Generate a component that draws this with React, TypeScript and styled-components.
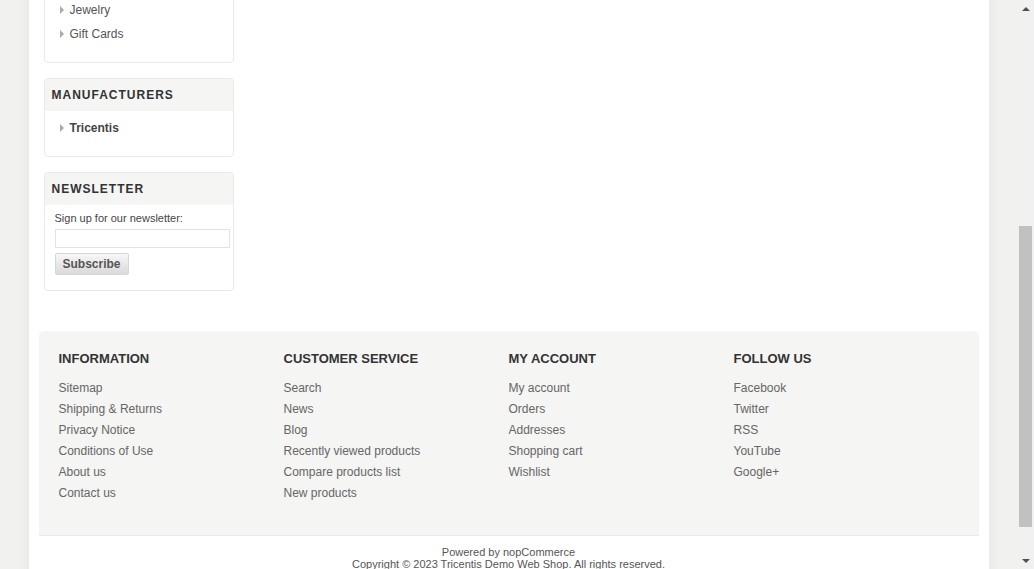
import React, { useLayoutEffect, useRef, useState } from "react";
import styled, { createGlobalStyle } from "styled-components";

const GlobalStyle = createGlobalStyle`
  html, body {
    margin: 0;
    padding: 0;
    height: 100%;
    overflow: hidden;
  }
  body {
    font: 12px "Liberation Sans", Arial, sans-serif;
    color: #444;
    background: #f1f1ef;
  }
  * { box-sizing: border-box; }
  ul { list-style: none; margin: 0; padding: 0; }
  a { color: inherit; text-decoration: none; }
`;

const Window = styled.div`
  height: 100vh;
  display: flex;
`;

const Viewport = styled.div`
  flex: 1;
  height: 100%;
  overflow: hidden;
  background: #f1f1ef;
`;

/* fake window scrollbar, the headless browser hides the real one */
const ScrollBar = styled.div`
  width: 17px;
  height: 100%;
  display: flex;
  flex-direction: column;
  background: #f1f1f1;
`;

const Arrow = styled.div<{ $down?: boolean }>`
  height: 17px;
  flex: none;
  display: flex;
  align-items: center;
  justify-content: center;

  &::before {
    content: "";
    border-left: 4px solid transparent;
    border-right: 4px solid transparent;
    ${(p) =>
      p.$down ? "border-top: 4px solid #505050;" : "border-bottom: 4px solid #505050;"}
  }
`;

const Track = styled.div`
  flex: 1;
  display: flex;
  flex-direction: column;
`;

const Thumb = styled.div`
  margin: 0 2px;
  background: #c1c1c1;
`;

const Master = styled.div`
  width: 960px;
  margin: 0 auto;
  background: #fff;
  box-shadow: 0 0 14px rgba(0, 0, 0, 0.06);
`;

const Header = styled.header`
  height: 150px;
  padding: 20px 15px 0;
  display: flex;
  justify-content: space-between;
  align-items: flex-start;
`;

const Logo = styled.div`
  font-size: 30px;
  font-weight: bold;
  color: #5c5c5c;
  padding-top: 30px;
`;

const HeaderLinks = styled.ul`
  display: flex;
  gap: 14px;
  color: #666;
  font-size: 12px;
`;

const TopMenu = styled.ul`
  height: 50px;
  margin: 0 10px 36px;
  display: flex;
  align-items: center;
  gap: 24px;
  padding: 0 20px;
  background: #f5f5f3;
  border-radius: 5px;
  font-weight: bold;
  color: #333;
  text-transform: uppercase;
`;

const Main = styled.div`
  display: flex;
  padding: 0 15px;
`;

const Side = styled.aside`
  width: 190px;
  display: flex;
  flex-direction: column;
  gap: 15px;
`;

const Block = styled.div`
  border: 1px solid #e9e9e9;
  border-radius: 4px;
`;

const BlockTitle = styled.div`
  height: 32px;
  display: flex;
  align-items: center;
  padding: 0 7px;
  background: #f5f5f3;
  border-radius: 3px 3px 0 0;
  font-size: 12px;
  font-weight: bold;
  letter-spacing: 1px;
  text-transform: uppercase;
  color: #333;
`;

const BlockList = styled.ul`
  padding: 5px 0 16px;
`;

const ListItem = styled.li<{ $bold?: boolean }>`
  height: 24px;
  display: flex;
  align-items: center;
  padding-left: 15px;
  font-weight: ${(p) => (p.$bold ? "bold" : "normal")};
  color: ${(p) => (p.$bold ? "#444" : "#555")};

  &::before {
    content: "";
    border-left: 4px solid #aaa;
    border-top: 4px solid transparent;
    border-bottom: 4px solid transparent;
    margin-right: 6px;
  }
`;

const NewsBody = styled.div`
  padding: 7px 0 15px 10px;
  display: flex;
  flex-direction: column;
  align-items: flex-start;
`;

const NewsLabel = styled.div`
  font-size: 11px;
  line-height: 13px;
  color: #444;
`;

const NewsInput = styled.input`
  width: 175px;
  height: 19px;
  margin: 4px 0 5px;
  border: 1px solid #e3e3e3;
  background: #fff;
  outline: none;
`;

const Button = styled.button`
  width: 74px;
  height: 22px;
  padding: 0;
  border: 1px solid #d6d6d6;
  border-radius: 2px;
  background: linear-gradient(#f7f7f7, #dadada);
  font: bold 12px "Liberation Sans", Arial, sans-serif;
  color: #555;
`;

const Center = styled.div`
  flex: 1;
`;

const Footer = styled.footer`
  margin: 40px 10px 0;
`;

const FooterMenu = styled.div`
  height: 205px;
  display: grid;
  grid-template-columns: repeat(4, 225px);
  padding: 19px 20px 0;
  background: #f5f5f3;
  border-radius: 5px 5px 0 0;
  border-bottom: 1px solid #e8e8e6;
`;

const ColumnTitle = styled.h3`
  margin: 0 0 10px;
  font-size: 13px;
  line-height: 18px;
  font-weight: bold;
  color: #333;
  text-transform: uppercase;
`;

const FooterLink = styled.li`
  font-size: 12px;
  line-height: 21px;
  color: #666;
`;

const FooterBottom = styled.div`
  padding: 10px 0 46px;
  text-align: center;
  font-size: 11px;
  line-height: 12px;
  color: #555;
`;

const categories = [
  "Books",
  "Computers",
  "Electronics",
  "Apparel & Shoes",
  "Digital downloads",
  "Jewelry",
  "Gift Cards",
];

const columns = [
  {
    title: "Information",
    links: ["Sitemap", "Shipping & Returns", "Privacy Notice", "Conditions of Use", "About us", "Contact us"],
  },
  {
    title: "Customer service",
    links: ["Search", "News", "Blog", "Recently viewed products", "Compare products list", "New products"],
  },
  {
    title: "My account",
    links: ["My account", "Orders", "Addresses", "Shopping cart", "Wishlist"],
  },
  {
    title: "Follow us",
    links: ["Facebook", "Twitter", "RSS", "YouTube", "Google+"],
  },
];

export default function App() {
  const ref = useRef<HTMLDivElement>(null);
  const [thumb, setThumb] = useState({ top: 210, size: 300 });

  useLayoutEffect(() => {
    const el = ref.current;
    if (!el) return;
    el.scrollTop = el.scrollHeight - el.clientHeight - 47;
    const track = el.clientHeight - 34;
    setThumb({
      top: Math.round((el.scrollTop / el.scrollHeight) * track),
      size: Math.round((el.clientHeight / el.scrollHeight) * track),
    });
  }, []);

  return (
    <>
      <GlobalStyle />
      <Window>
        <Viewport ref={ref}>
          <Master>
            <Header>
              <Logo>Tricentis Demo Web Shop</Logo>
              <HeaderLinks>
                <li>Register</li>
                <li>Log in</li>
                <li>Shopping cart (0)</li>
                <li>Wishlist (0)</li>
              </HeaderLinks>
            </Header>
            <TopMenu>
              {categories.map((c) => (
                <li key={c}>{c}</li>
              ))}
            </TopMenu>
            <Main>
              <Side>
                <Block>
                  <BlockTitle>Categories</BlockTitle>
                  <BlockList>
                    {categories.map((c) => (
                      <ListItem key={c}>{c}</ListItem>
                    ))}
                  </BlockList>
                </Block>
                <Block>
                  <BlockTitle>Manufacturers</BlockTitle>
                  <BlockList>
                    <ListItem $bold>Tricentis</ListItem>
                  </BlockList>
                </Block>
                <Block>
                  <BlockTitle>Newsletter</BlockTitle>
                  <NewsBody>
                    <NewsLabel>Sign up for our newsletter:</NewsLabel>
                    <NewsInput type="text" />
                    <Button>Subscribe</Button>
                  </NewsBody>
                </Block>
              </Side>
              <Center />
            </Main>
            <Footer>
              <FooterMenu>
                {columns.map((col) => (
                  <div key={col.title}>
                    <ColumnTitle>{col.title}</ColumnTitle>
                    <ul>
                      {col.links.map((l) => (
                        <FooterLink key={l}>{l}</FooterLink>
                      ))}
                    </ul>
                  </div>
                ))}
              </FooterMenu>
              <FooterBottom>
                <div>Powered by nopCommerce</div>
                <div>Copyright © 2023 Tricentis Demo Web Shop. All rights reserved.</div>
              </FooterBottom>
            </Footer>
          </Master>
        </Viewport>
        <ScrollBar>
          <Arrow />
          <Track>
            <Thumb style={{ marginTop: thumb.top, height: thumb.size }} />
          </Track>
          <Arrow $down />
        </ScrollBar>
      </Window>
    </>
  );
}
